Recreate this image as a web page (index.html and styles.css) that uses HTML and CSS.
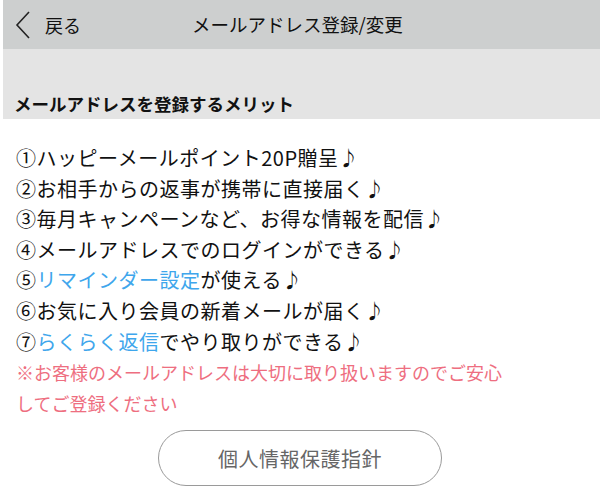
FILE: index.html
```html
<!DOCTYPE html>
<html lang="ja">
<head>
<meta charset="utf-8">
<link rel="stylesheet" href="styles.css">
</head>
<body>
<div class="page">
  <header class="topbar">
    <a class="back">
      <svg class="chev" width="18" height="30" viewBox="0 0 18 30"><path d="M15 2 L3 15 L15 28" fill="none" stroke="#222" stroke-width="1.6"/></svg>
      <span>戻る</span>
    </a>
    <h1 class="title">メールアドレス登録/変更</h1>
  </header>
  <div class="band">
    <h2 class="band-title">メールアドレスを登録するメリット</h2>
  </div>
  <ul class="merits">
    <li>①ハッピーメールポイント20P贈呈♪</li>
    <li>②お相手からの返事が携帯に直接届く♪</li>
    <li>③毎月キャンペーンなど、お得な情報を配信♪</li>
    <li>④メールアドレスでのログインができる♪</li>
    <li>⑤<span class="link">リマインダー設定</span>が使える♪</li>
    <li>⑥お気に入り会員の新着メールが届く♪</li>
    <li>⑦<span class="link">らくらく返信</span>でやり取りができる♪</li>
  </ul>
  <p class="note">※お客様のメールアドレスは大切に取り扱いますのでご安心<br>してご登録ください</p>
  <div class="actions">
    <a class="pill">個人情報保護指針</a>
  </div>
</div>
</body>
</html>
```
FILE: styles.css
```css
html, body {
  margin: 0;
  padding: 0;
  background: #fff;
}
body {
  font-family: "Noto Sans CJK JP", "Noto Sans", sans-serif;
  color: #111;
}
.page {
  padding-left: 3px;
  width: 597px;
  height: 490px;
  overflow: hidden;
}
.topbar {
  height: 49px;
  background: #cdcfcf;
  display: flex;
  align-items: center;
  position: relative;
}
.back {
  display: flex;
  align-items: center;
  gap: 13px;
  padding-left: 11px;
  font-size: 18px;
  color: #111;
}
.chev {
  display: block;
}
.title {
  position: absolute;
  left: 0;
  right: 0;
  top: 0;
  margin: 0;
  line-height: 49px;
  text-align: center;
  font-size: 18.5px;
  font-weight: 400;
  padding-right: 8px;
  pointer-events: none;
}
.band {
  height: 70px;
  background: #e4e4e4;
  display: flex;
  align-items: flex-end;
}
.band-title {
  margin: 0 0 3px 11px;
  font-size: 17.5px;
  font-weight: 700;
  line-height: 24px;
}
.merits {
  list-style: none;
  margin: 0;
  padding: 24px 0 0 13px;
  font-size: 20px;
  line-height: 30.6px;
  letter-spacing: 0.5px;
}
.link {
  color: #3ea6ec;
}
.note {
  margin: 0;
  padding-left: 13px;
  color: #ee6e80;
  font-size: 18px;
  line-height: 31px;
  letter-spacing: 0px;
}
.actions {
  display: flex;
  justify-content: center;
  padding-top: 11px;
  margin-left: -3px;
}
.pill {
  width: 282px;
  height: 54px;
  border: 1px solid #9a9a9a;
  border-radius: 28px;
  display: flex;
  align-items: center;
  justify-content: center;
  font-size: 20px;
  color: #666;
  letter-spacing: 0.5px;
}
```
